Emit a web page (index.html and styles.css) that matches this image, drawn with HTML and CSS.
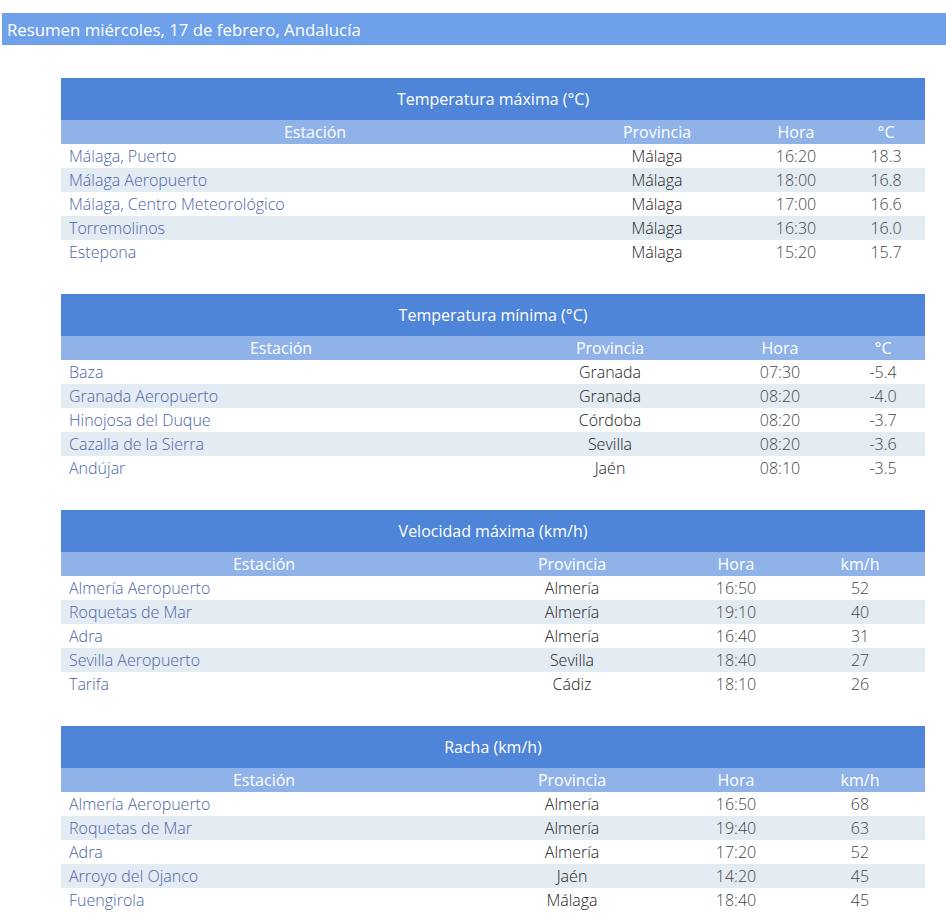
FILE: index.html
```html
<!DOCTYPE html>
<html lang="es">
<head>
<meta charset="utf-8">
<title>Resumen Andalucía</title>
<link rel="stylesheet" href="styles.css">
</head>
<body>
<div class="titlebar">Resumen miércoles, 17 de febrero, Andalucía</div>
<div class="content">
<table class="summary tmax">
<colgroup><col class="c1"><col class="c2"><col class="c3"><col class="c4"></colgroup>
<thead>
<tr><th class="caption" colspan="4">Temperatura máxima (°C)</th></tr>
<tr class="cols"><th>Estación</th><th>Provincia</th><th>Hora</th><th>°C</th></tr>
</thead>
<tbody>
<tr><td class="st"><a href="#">Málaga, Puerto</a></td><td class="pr">Málaga</td><td class="hr">16:20</td><td class="vl">18.3</td></tr>
<tr><td class="st"><a href="#">Málaga Aeropuerto</a></td><td class="pr">Málaga</td><td class="hr">18:00</td><td class="vl">16.8</td></tr>
<tr><td class="st"><a href="#">Málaga, Centro Meteorológico</a></td><td class="pr">Málaga</td><td class="hr">17:00</td><td class="vl">16.6</td></tr>
<tr><td class="st"><a href="#">Torremolinos</a></td><td class="pr">Málaga</td><td class="hr">16:30</td><td class="vl">16.0</td></tr>
<tr><td class="st"><a href="#">Estepona</a></td><td class="pr">Málaga</td><td class="hr">15:20</td><td class="vl">15.7</td></tr>
</tbody>
</table>

<table class="summary tmin">
<colgroup><col class="c1"><col class="c2"><col class="c3"><col class="c4"></colgroup>
<thead>
<tr><th class="caption" colspan="4">Temperatura mínima (°C)</th></tr>
<tr class="cols"><th>Estación</th><th>Provincia</th><th>Hora</th><th>°C</th></tr>
</thead>
<tbody>
<tr><td class="st"><a href="#">Baza</a></td><td class="pr">Granada</td><td class="hr">07:30</td><td class="vl">-5.4</td></tr>
<tr><td class="st"><a href="#">Granada Aeropuerto</a></td><td class="pr">Granada</td><td class="hr">08:20</td><td class="vl">-4.0</td></tr>
<tr><td class="st"><a href="#">Hinojosa del Duque</a></td><td class="pr">Córdoba</td><td class="hr">08:20</td><td class="vl">-3.7</td></tr>
<tr><td class="st"><a href="#">Cazalla de la Sierra</a></td><td class="pr">Sevilla</td><td class="hr">08:20</td><td class="vl">-3.6</td></tr>
<tr><td class="st"><a href="#">Andújar</a></td><td class="pr">Jaén</td><td class="hr">08:10</td><td class="vl">-3.5</td></tr>
</tbody>
</table>

<table class="summary wind">
<colgroup><col class="c1"><col class="c2"><col class="c3"><col class="c4"></colgroup>
<thead>
<tr><th class="caption" colspan="4">Velocidad máxima (km/h)</th></tr>
<tr class="cols"><th>Estación</th><th>Provincia</th><th>Hora</th><th>km/h</th></tr>
</thead>
<tbody>
<tr><td class="st"><a href="#">Almería Aeropuerto</a></td><td class="pr">Almería</td><td class="hr">16:50</td><td class="vl">52</td></tr>
<tr><td class="st"><a href="#">Roquetas de Mar</a></td><td class="pr">Almería</td><td class="hr">19:10</td><td class="vl">40</td></tr>
<tr><td class="st"><a href="#">Adra</a></td><td class="pr">Almería</td><td class="hr">16:40</td><td class="vl">31</td></tr>
<tr><td class="st"><a href="#">Sevilla Aeropuerto</a></td><td class="pr">Sevilla</td><td class="hr">18:40</td><td class="vl">27</td></tr>
<tr><td class="st"><a href="#">Tarifa</a></td><td class="pr">Cádiz</td><td class="hr">18:10</td><td class="vl">26</td></tr>
</tbody>
</table>

<table class="summary wind">
<colgroup><col class="c1"><col class="c2"><col class="c3"><col class="c4"></colgroup>
<thead>
<tr><th class="caption" colspan="4">Racha (km/h)</th></tr>
<tr class="cols"><th>Estación</th><th>Provincia</th><th>Hora</th><th>km/h</th></tr>
</thead>
<tbody>
<tr><td class="st"><a href="#">Almería Aeropuerto</a></td><td class="pr">Almería</td><td class="hr">16:50</td><td class="vl">68</td></tr>
<tr><td class="st"><a href="#">Roquetas de Mar</a></td><td class="pr">Almería</td><td class="hr">19:40</td><td class="vl">63</td></tr>
<tr><td class="st"><a href="#">Adra</a></td><td class="pr">Almería</td><td class="hr">17:20</td><td class="vl">52</td></tr>
<tr><td class="st"><a href="#">Arroyo del Ojanco</a></td><td class="pr">Jaén</td><td class="hr">14:20</td><td class="vl">45</td></tr>
<tr><td class="st"><a href="#">Fuengirola</a></td><td class="pr">Málaga</td><td class="hr">18:40</td><td class="vl">45</td></tr>
</tbody>
</table>
</div>
</body>
</html>
```

FILE: styles.css
```css
html, body {
  margin: 0;
  padding: 0;
  background: #ffffff;
}

body {
  font-family: "Open Sans", "Liberation Sans", sans-serif;
  color: #333333;
}

.titlebar {
  margin: 13px 0 0 2px;
  height: 32px;
  line-height: 33px;
  padding-left: 5px;
  background: #6fa0ea;
  color: #ffffff;
  font-size: 16.8px;
  font-weight: 400;
}

.content {
  padding: 33px 21px 8px 61px;
  display: flex;
  flex-direction: column;
  gap: 30px;
}

.summary {
  width: 864px;
  table-layout: fixed;
  border-collapse: collapse;
  border-spacing: 0;
  font-size: 16px;
}

/* column widths per table */
.tmax .c1 { width: 508px; }
.tmax .c2 { width: 176px; }
.tmax .c3 { width: 102px; }
.tmax .c4 { width: 78px; }

.tmin .c1 { width: 440px; }
.tmin .c2 { width: 218px; }
.tmin .c3 { width: 122px; }
.tmin .c4 { width: 84px; }

.wind .c1 { width: 406px; }
.wind .c2 { width: 210px; }
.wind .c3 { width: 118px; }
.wind .c4 { width: 130px; }

.summary th {
  padding: 0;
  font-weight: 400;
  color: #ffffff;
  text-align: center;
}

.summary th.caption {
  background: #4f85d8;
  height: 42px;
  font-size: 16px;
}

.summary tr.cols th {
  background: #8fb2e9;
  height: 24px;
  line-height: 24px;
  font-size: 16px;
}

.summary td {
  height: 24px;
  padding: 0;
  line-height: 24px;
  font-weight: 300;
  text-align: center;
  white-space: nowrap;
}

.summary tbody tr:nth-child(even) td {
  background: #e3ebf3;
}

.summary td.st {
  text-align: left;
  padding-left: 8px;
}

.summary td.st a {
  color: #4d64a8;
  text-decoration: none;
}

.summary td.pr {
  color: #222222;
}

.summary td.hr,
.summary td.vl {
  color: #444444;
}
```
